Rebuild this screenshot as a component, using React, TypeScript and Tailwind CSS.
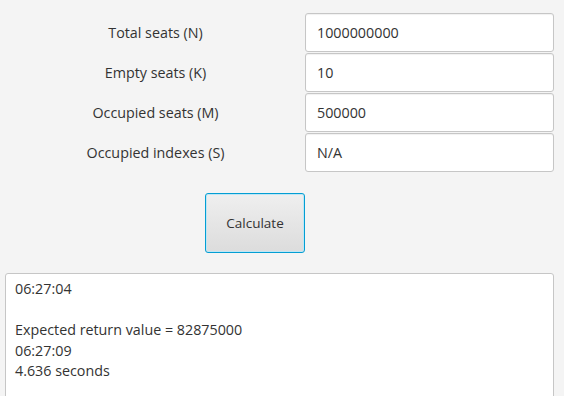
import React from "react";

const rows = [
  ["Total seats (N)", "1000000000"],
  ["Empty seats (K)", "10"],
  ["Occupied seats (M)", "500000"],
  ["Occupied indexes (S)", "N/A"],
];

export default function App() {
  return (
    <div
      className="w-[564px] h-[396px] bg-[#f4f4f4] overflow-hidden text-[#333333]"
      style={{ fontFamily: '"Open Sans", "Noto Sans", sans-serif' }}
    >
      <div className="pt-[13px] flex flex-col gap-[1px]">
        {rows.map(([label, value]) => (
          <div key={label} className="flex items-center h-[39px]">
            <div className="w-[305px] pl-[6px] text-center text-[14.3px]">{label}</div>
            <div className="w-[249px] h-[39px] bg-white border border-[#c6c6c6] rounded-[3px] flex items-center pl-[11px] pr-[8px] text-[14.3px] shadow-[inset_0_1px_1px_rgba(0,0,0,0.06)]">
              {value}
            </div>
          </div>
        ))}
      </div>
      <div className="pl-[205px] pt-[21px]">
        <button className="w-[100px] h-[60px] rounded-[3px] border border-[#039ed3] shadow-[inset_0_0_0_1px_#bfe6f5] bg-gradient-to-b from-[#efefef] to-[#dcdcdc] text-[13.5px] text-[#333333]">
          Calculate
        </button>
      </div>
      <div className="ml-[5px] mt-[20px] w-[549px] h-[140px] bg-white border border-[#c6c6c6] rounded-[3px] pl-[9px] pr-[10px] pt-[5px] text-[14.3px] leading-[20.5px]">
        <div>06:27:04</div>
        <div>&nbsp;</div>
        <div>Expected return value = 82875000</div>
        <div>06:27:09</div>
        <div>4.636 seconds</div>
      </div>
    </div>
  );
}
